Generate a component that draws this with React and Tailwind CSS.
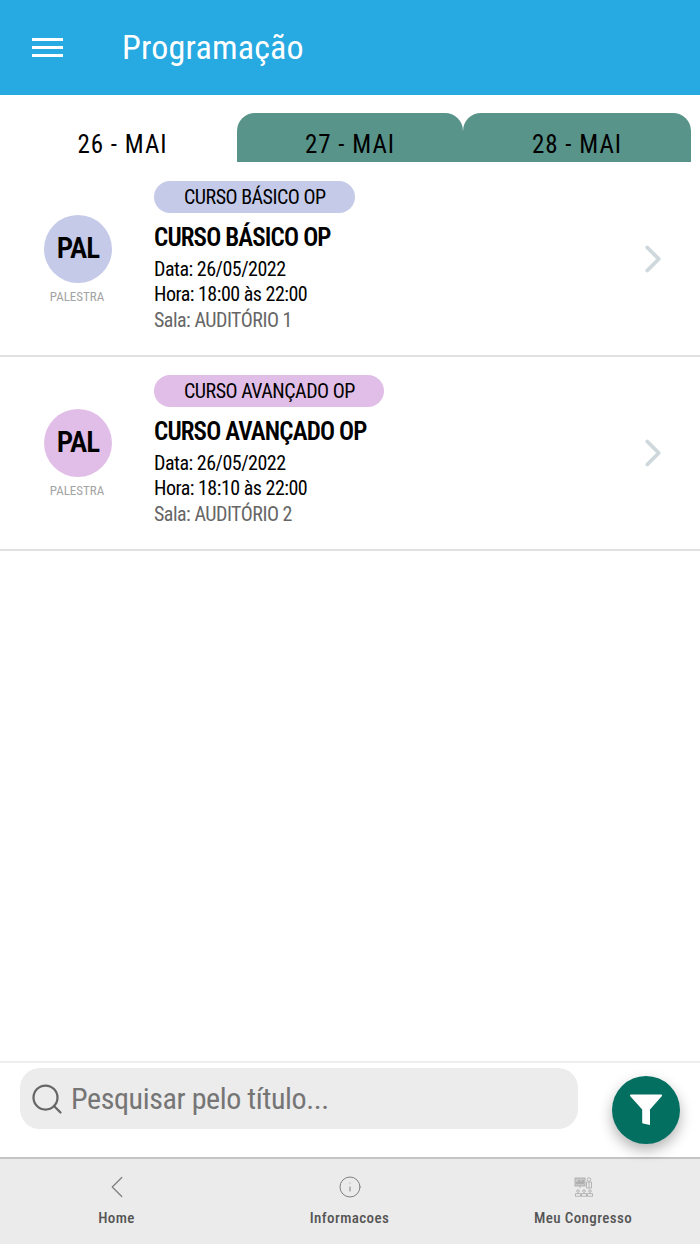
import React from "react";
import { Search, Info, ChevronLeft, ChevronRight } from "lucide-react";

const sessions = [
  {
    id: 1,
    track: "CURSO BÁSICO OP",
    date: "26/05/2022",
    time: "18:00 às 22:00",
    room: "AUDITÓRIO 1",
    circle: "bg-[#c5cae9]",
  },
  {
    id: 2,
    track: "CURSO AVANÇADO OP",
    date: "26/05/2022",
    time: "18:10 às 22:00",
    room: "AUDITÓRIO 2",
    circle: "bg-[#e1bee7]",
  },
];

function CongressIcon() {
  return (
    <svg width="20" height="20" viewBox="0 0 20 20" fill="none" stroke="#a8a8a8" strokeWidth="0.8">
      <rect x="1" y="1" width="10" height="8" fill="#c8c8c8" />
      <path d="M3 7V5M5 7V3M7 7V4M9 7V3" stroke="#8c8c8c" />
      <path d="M6 9v2" />
      <circle cx="15" cy="2.5" r="1.8" />
      <path d="M12.5 5h5v6h-5zM15 5v6" />
      <circle cx="4" cy="14" r="1.3" />
      <circle cx="10" cy="14" r="1.3" />
      <circle cx="16" cy="14" r="1.3" />
      <path d="M1.5 19v-2.5h5V19M7.5 19v-2.5h5V19M13.5 19v-2.5h5V19M1 19.2h18" />
    </svg>
  );
}

function SessionRow({ session }) {
  return (
    <div className="flex h-[194px] items-start border-b-2 border-[#e0e0e0] bg-white">
      <div className="mt-[52px] flex w-[154px] flex-col items-center">
        <div
          className={`ml-[2px] flex h-[68px] w-[68px] items-center justify-center rounded-full text-[29px] font-semibold tracking-[-0.8px] text-black ${session.circle}`}
        >
          PAL
        </div>
        <span className="mt-[5px] text-[13px] leading-[18px] text-[#a3a3a3]">PALESTRA</span>
      </div>
      <div className="flex-1 pt-[18px]">
        <div
          className={`flex h-[32px] w-fit items-center rounded-full pl-[30px] pr-[29px] text-[20px] tracking-[-0.5px] text-black ${session.circle}`}
        >
          {session.track}
        </div>
        <div className="mt-[9px] text-[25px] font-semibold leading-[32px] tracking-[-0.85px] text-black">{session.track}</div>
        <div className="mt-[3px] text-[20px] leading-[25.4px] tracking-[-0.5px] text-black">Data: {session.date}</div>
        <div className="text-[20px] leading-[25.4px] tracking-[-0.5px] text-black">Hora: {session.time}</div>
        <div className="text-[20px] leading-[25.4px] tracking-[-0.5px] text-[#666666]">Sala: {session.room}</div>
      </div>
      <ChevronRight className="mr-[24px] mt-[73px] text-[#cfd8dc]" size={46} strokeWidth={2} />
    </div>
  );
}

export default function App() {
  return (
    <div className="relative flex h-[1244px] w-[700px] flex-col overflow-hidden bg-white font-['Roboto',sans-serif] [font-stretch:75%]">
      {/* Header */}
      <div className="flex h-[95px] shrink-0 items-center bg-[#27a9e1]">
        <div className="ml-[32px] flex w-[31px] flex-col gap-[5px]">
          <span className="h-[3px] bg-white" />
          <span className="h-[3px] bg-white" />
          <span className="h-[3px] bg-white" />
        </div>
        <h1 className="ml-[59px] text-[34px] font-normal tracking-[0.2px] text-white">Programação</h1>
      </div>

      {/* Tabs */}
      <div className="mt-[18px] flex h-[49px] shrink-0 pr-[9px] text-[25px] tracking-[1px] text-black">
        <div className="flex w-[237px] items-center justify-center pl-[8px] pt-[15px]">26 - MAI</div>
        <div className="flex w-[226px] items-center justify-center rounded-t-[18px] bg-[#58948a] pt-[15px]">27 - MAI</div>
        <div className="flex flex-1 items-center justify-center rounded-t-[18px] bg-[#58948a] pt-[15px]">28 - MAI</div>
      </div>

      {/* List */}
      <div className="flex-1 pt-[1px]">
        {sessions.map((session) => (
          <SessionRow key={session.id} session={session} />
        ))}
      </div>

      {/* Search */}
      <div className="flex h-[96px] shrink-0 border-t-2 border-[#eeeeee] pl-[20px] pt-[5px]">
        <div className="flex h-[61px] w-[558px] items-center rounded-[20px] bg-[#ececec] pl-[9px]">
          <Search className="shrink-0 text-[#666666]" size={36} strokeWidth={1.5} />
          <span className="ml-[6px] text-[30px] tracking-[-0.4px] text-[#757575]">Pesquisar pelo título...</span>
        </div>
      </div>

      {/* Filter button */}
      <div className="absolute left-[612px] top-[1076px] flex h-[68px] w-[68px] items-center justify-center rounded-full bg-[#026f61] shadow-[0_6px_14px_rgba(0,0,0,0.3)]">
        <svg width="34" height="32" viewBox="0 0 34 32" fill="white">
          <path d="M1 1.5C1 1 1.4 .6 2 .6h30c.6 0 1 .4 1 .9 0 .3-.1.5-.3.7L21 15.500V31l-7-1.500a1 1 0 0 1-.8-1V15.500L1.300 2.200A1 1 0 0 1 1 1.500z" />
        </svg>
      </div>

      {/* Bottom nav */}
      <div className="grid h-[87px] shrink-0 grid-cols-[233px_233px_1fr] border-t-2 border-[#c4c4c4] bg-[#ebebeb] text-[15px] font-medium tracking-[0.4px] text-[#555555]">
        <div className="flex flex-col items-center pt-[9px]">
          <ChevronLeft className="text-[#808080]" size={38} strokeWidth={0.8} />
          <span className="mt-[1px]">Home</span>
        </div>
        <div className="flex flex-col items-center pt-[16px]">
          <Info className="text-[#808080]" size={24} strokeWidth={1} />
          <span className="mt-[8px]">Informacoes</span>
        </div>
        <div className="flex flex-col items-center pt-[18px]">
          <div className="ml-[1px]">
            <CongressIcon />
          </div>
          <span className="mt-[10px]">Meu Congresso</span>
        </div>
      </div>
    </div>
  );
}
